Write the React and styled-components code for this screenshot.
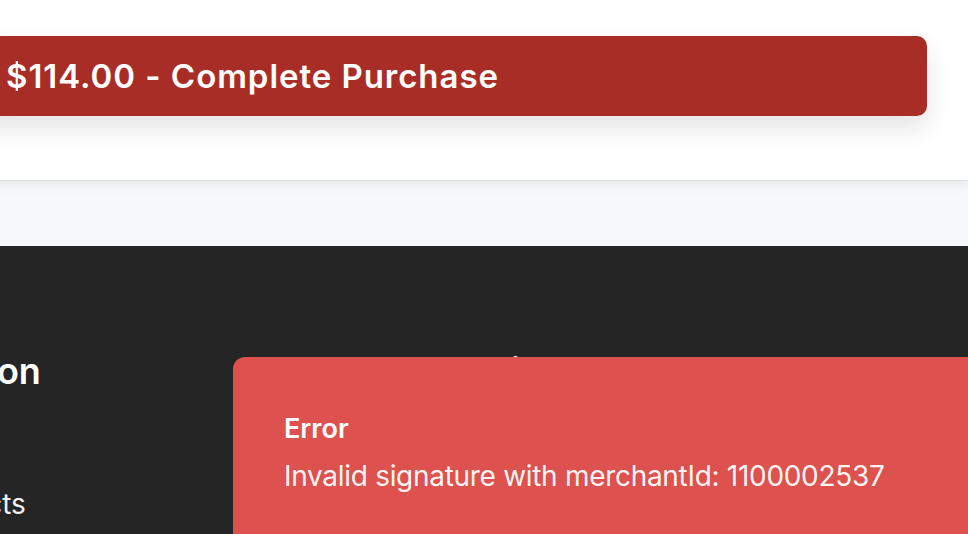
import React from "react";
import styled, { createGlobalStyle } from "styled-components";

const GlobalStyle = createGlobalStyle`
  html, body { margin: 0; padding: 0; }
  body {
    background: #f7f8fa;
    font-family: Inter, "Noto Sans", "Liberation Sans", sans-serif;
    -webkit-font-smoothing: antialiased;
  }
  * { box-sizing: border-box; }
`;

const Page = styled.div`
  position: relative;
  width: 968px;
  height: 534px;
  overflow: hidden;
  background: #f7f8fa;
`;

const CheckoutCard = styled.section`
  height: 180px;
  margin-left: -24px;
  padding: 36px 41px 0 0;
  background: #ffffff;
  box-shadow: 0 1px 0 rgba(0, 0, 0, 0.06), 0 3px 14px rgba(0, 0, 0, 0.09);
  position: relative;
  z-index: 1;
`;

const PurchaseButton = styled.button`
  display: flex;
  align-items: center;
  width: 100%;
  height: 80px;
  padding: 0 0 0 30px;
  border: 0;
  border-radius: 10px;
  background: #a92d27;
  color: #ffffff;
  font-family: inherit;
  font-size: 33px;
  font-weight: 600;
  letter-spacing: 0.95px;
  text-align: left;
  box-shadow: 0 12px 26px rgba(0, 0, 0, 0.11);
  cursor: pointer;
`;

const Gap = styled.div`
  height: 66px;
`;

const Footer = styled.footer`
  height: 288px;
  background: #252525;
  color: #ffffff;
  padding-top: 103px;
`;

const Columns = styled.div`
  display: grid;
  grid-template-columns: 414px 760px 300px;
  margin-left: ${(p) => p.$shift}px;
`;

const Column = styled.div`
  display: flex;
  flex-direction: column;
`;

const ColumnTitle = styled.h3`
  margin: 0 0 31px;
  font-size: 36px;
  line-height: 44px;
  font-weight: 600;
  white-space: nowrap;
`;

const LinkList = styled.ul`
  list-style: none;
  margin: 0;
  padding: 0;
  display: flex;
  flex-direction: column;
  gap: 20px;
`;

const LinkItem = styled.li`
  font-size: 28px;
  line-height: 40px;
  font-weight: 400;
  color: #f2f2f2;
  white-space: nowrap;
`;

const Toast = styled.div`
  position: absolute;
  left: 233px;
  top: 357px;
  width: 780px;
  height: 220px;
  padding: 51px 51px;
  border-radius: 12px;
  background: #dd524e;
  color: #ffffff;
  z-index: 5;
`;

const ToastTitle = styled.div`
  font-size: 27px;
  line-height: 42px;
  font-weight: 600;
`;

const ToastMessage = styled.div`
  margin-top: 5px;
  font-size: 28px;
  line-height: 42px;
  font-weight: 400;
  letter-spacing: -0.3px;
  color: rgba(255, 255, 255, 0.96);
`;

const columns = [
  { title: "Information", links: ["About", "New Products"] },
  { title: "Customer service", links: ["Contact", "Shipping"] },
  { title: "Follow us", links: ["Instagram", "Facebook"] },
];

export default function App() {
  return (
    <>
      <GlobalStyle />
      <Page>
        <CheckoutCard>
          <PurchaseButton>$114.00 - Complete Purchase</PurchaseButton>
        </CheckoutCard>
        <Gap />
        <Footer>
          <Columns $shift={-160}>
            {columns.map((c) => (
              <Column key={c.title}>
                <ColumnTitle>{c.title}</ColumnTitle>
                <LinkList>
                  {c.links.map((l) => (
                    <LinkItem key={l}>{l}</LinkItem>
                  ))}
                </LinkList>
              </Column>
            ))}
          </Columns>
        </Footer>
        <Toast role="alert">
          <ToastTitle>Error</ToastTitle>
          <ToastMessage>Invalid signature with merchantId: 1100002537</ToastMessage>
        </Toast>
      </Page>
    </>
  );
}
